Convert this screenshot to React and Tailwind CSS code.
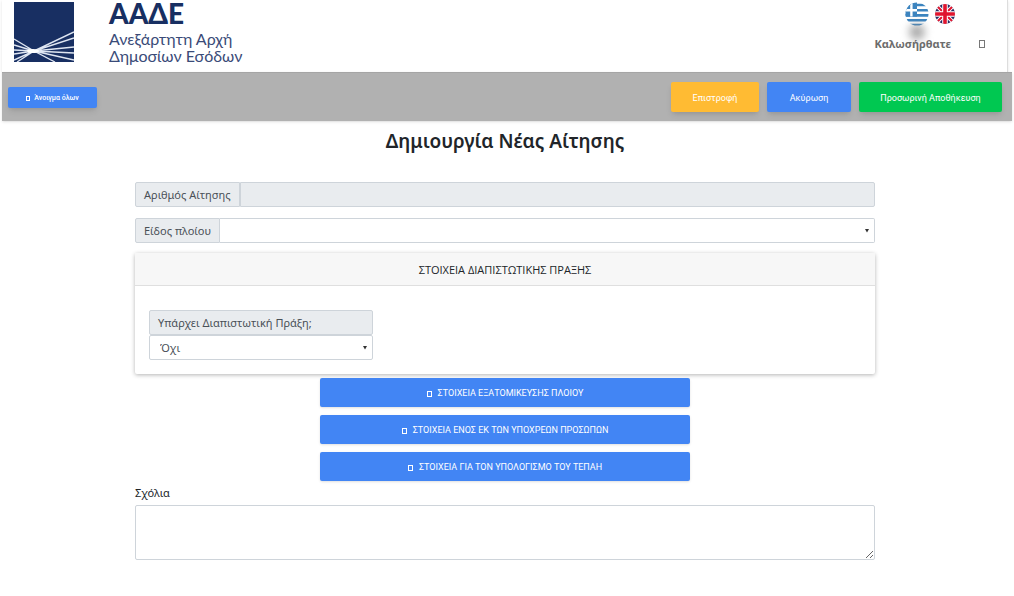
import { useState } from 'react';

const sections = [
  { id: 'vessel', title: 'ΣΤΟΙΧΕΙΑ ΕΞΑΤΟΜΙΚΕΥΣΗΣ ΠΛΟΙΟΥ' },
  { id: 'person', title: 'ΣΤΟΙΧΕΙΑ ΕΝΟΣ ΕΚ ΤΩΝ ΥΠΟΧΡΕΩΝ ΠΡΟΣΩΠΩΝ' },
  { id: 'fee', title: 'ΣΤΟΙΧΕΙΑ ΓΙΑ ΤΟΝ ΥΠΟΛΟΓΙΣΜΟ ΤΟΥ ΤΕΠΑΗ' }
];

const Logo = () => (
  <svg className="w-[60px] h-[60px]" viewBox="0 0 60 60" aria-hidden="true">
    <rect width="60" height="60" fill="#182f62" />
    <g stroke="#dfe6f2" strokeWidth="1.4">
      <path d="M20 49L0 37M20 49L0 43M20 49L0 48M20 49L0 52M20 49L0 58M20 49L3 60" />
      <path d="M20 49L60 30M20 49L60 36M20 49L60 45M20 49L60 51M20 49L60 58M20 49L41 60" />
    </g>
    <ellipse cx="19" cy="49" rx="6" ry="2" fill="#fff" />
  </svg>
);

const GreekFlag = () => (
  <svg className="w-6 h-6" viewBox="0 0 24 24" aria-hidden="true">
    <defs>
      <clipPath id="gr"><circle cx="12" cy="12" r="11.5" /></clipPath>
    </defs>
    <g clipPath="url(#gr)">
      <rect width="24" height="24" fill="#fff" />
      <path d="M0 3h24M0 8.2h24M0 13.4h24M0 18.2h24M0 23h24" stroke="#3c84bf" strokeWidth="2.6" />
      <rect width="12" height="14.6" fill="#3c84bf" />
      <path d="M6.4 0v14.6M0 8.2h12" stroke="#fff" strokeWidth="2.4" />
    </g>
  </svg>
);

const UkFlag = () => (
  <svg className="w-5 h-5" viewBox="0 0 20 20" aria-hidden="true">
    <defs>
      <clipPath id="uk"><circle cx="10" cy="10" r="10" /></clipPath>
    </defs>
    <g clipPath="url(#uk)">
      <rect width="20" height="20" fill="#262a63" />
      <path d="M0 0l20 20M20 0L0 20" stroke="#fff" strokeWidth="4" />
      <path d="M0 0l20 20M20 0L0 20" stroke="#e0152f" strokeWidth="2" />
      <path d="M10 0v20M0 10h20" stroke="#fff" strokeWidth="5.6" />
      <path d="M10 0v20M0 10h20" stroke="#e0152f" strokeWidth="3.6" />
    </g>
  </svg>
);

const Caret = () => (
  <svg className="absolute right-1.5 top-1/2 -translate-y-1/2 w-1 h-1 pointer-events-none" viewBox="0 0 4 4" aria-hidden="true">
    <path d="M0 0h4L2 3.5z" fill="#333" />
  </svg>
);

const App = () => {
  const [vesselType, setVesselType] = useState('');
  const [hasAct, setHasAct] = useState('no');
  const [comments, setComments] = useState('');

  return (
    <div className="min-h-screen bg-white px-0.5 font-['Noto_Sans',sans-serif] text-[11px] text-[#212529]">
      <header className="mr-1 flex h-[72px] items-start justify-between border-r border-[#ddd] pl-3 pr-5 shadow-sm">
        <a href="#" className="flex gap-[35px] text-[#182f62]">
          <span className="pt-0.5"><Logo /></span>
          <span className="font-[Lato,sans-serif]">
            <span className="block text-[28px] leading-[26px] font-black">ΑΑΔΕ</span>
            <span className="mt-1 block text-base leading-[17px] text-[#3a4b78]">
              Ανεξάρτητη Αρχή<br />Δημοσίων Εσόδων
            </span>
          </span>
        </a>
        <div className="flex flex-col">
          <div className="relative flex items-center gap-1.5 self-center pr-0.5 pt-0.5">
            <button type="button" aria-label="Ελληνικά"><GreekFlag /></button>
            <button type="button" aria-label="English"><UkFlag /></button>
            <span className="absolute left-1 top-6 h-4 w-4 rounded-full bg-[#888]/70 blur-xs"></span>
          </div>
          <div className="relative mt-2.5 flex items-center gap-7 font-bold text-[#6c6c6c]">
            <span>Καλωσήρθατε</span>
            <button type="button" aria-label="Έξοδος" className="mr-0.5 h-2 w-1.5 border border-[#777]"></button>
          </div>
        </div>
      </header>

      <div className="flex h-[49px] items-center justify-between border-t border-[#a5a5a5] bg-[#b1b1b1] pl-1.5 pr-2.5 font-[Roboto,sans-serif] text-white shadow">
        <button type="button" className="flex h-[21px] w-[89px] items-center justify-center gap-1 rounded-xs bg-[#4285f4] pt-0.5 text-[7px] font-medium shadow-md">
          <span className="h-[5px] w-1 border border-white"></span>
          Άνοιγμα όλων
        </button>
        <div className="flex gap-2 text-[9px]">
          <button type="button" className="h-[30px] w-[88px] rounded-xs bg-[#ffbb33] pt-1 shadow-md">Επιστροφή</button>
          <button type="button" className="h-[30px] w-[84px] rounded-xs bg-[#4285f4] pt-1 shadow-md">Ακύρωση</button>
          <button type="button" className="h-[30px] w-[143px] rounded-xs bg-[#00c851] pt-1 shadow-md">Προσωρινή Αποθήκευση</button>
        </div>
      </div>

      <main className="mr-1 px-4">
        <form className="mx-auto max-w-[740px]" onSubmit={(e) => e.preventDefault()}>
          <h1 className="pt-1.5 text-center text-[19px] leading-7 font-semibold">Δημιουργία Νέας Αίτησης</h1>

          <div className="mt-[27px] flex h-[25px]">
            <label htmlFor="number" className="flex items-center rounded-l-xs border border-[#ced4da] bg-[#e9ecef] px-2 pt-0.5 text-[#495057]">
              Αριθμός Αίτησης
            </label>
            <input id="number" readOnly className="min-w-0 flex-1 rounded-r-xs border border-[#ced4da] bg-[#e9ecef] px-2" />
          </div>

          <div className="mt-[11px] flex h-[25px]">
            <label htmlFor="type" className="flex items-center rounded-l-xs border border-[#ced4da] bg-[#e9ecef] px-2 pt-0.5 text-[#495057]">
              Είδος πλοίου
            </label>
            <div className="relative flex-1">
              <select
                id="type"
                value={vesselType}
                onChange={(e) => setVesselType(e.target.value)}
                className="h-full w-full appearance-none rounded-r-xs border border-l-0 border-[#ced4da] bg-white px-2"
              >
                <option value=""></option>
              </select>
              <Caret />
            </div>
          </div>

          <section className="mt-2.5 rounded-xs bg-white shadow-[0_1px_4px_rgba(0,0,0,0.3)]">
            <h2 className="flex h-[33px] items-center justify-center border-b border-[#dfdfdf] bg-[#f7f7f7] pt-0.5 font-['Open_Sans',sans-serif]">
              ΣΤΟΙΧΕΙΑ ΔΙΑΠΙΣΤΩΤΙΚΗΣ ΠΡΑΞΗΣ
            </h2>
            <div className="px-3.5 pt-6 pb-3.5 text-[#495057]">
              <div className="w-56">
                <label htmlFor="act" className="flex h-[25px] items-center rounded-xs border border-[#ced4da] bg-[#e9ecef] px-2 pt-0.5">
                  Υπάρχει Διαπιστωτική Πράξη;
                </label>
                <div className="relative h-[25px]">
                  <select
                    id="act"
                    value={hasAct}
                    onChange={(e) => setHasAct(e.target.value)}
                    className="h-full w-full appearance-none rounded-xs border border-[#ced4da] bg-white px-2.5 pt-0.5"
                  >
                    <option value="no">Όχι</option>
                    <option value="yes">Ναι</option>
                  </select>
                  <Caret />
                </div>
              </div>
            </div>
          </section>

          <div className="mx-auto mt-1 flex w-1/2 flex-col gap-2">
            {sections.map(section => (
              <button
                key={section.id}
                type="button"
                className="flex h-[29px] items-center justify-center gap-1.5 rounded-xs bg-[#4285f4] pt-0.5 font-[Roboto,sans-serif] text-[9px] text-white shadow"
              >
                <span className="h-1.5 w-[5px] border border-white"></span>
                {section.title}
              </button>
            ))}
          </div>

          <label htmlFor="comments" className="mt-1 block leading-4">Σχόλια</label>
          <textarea
            id="comments"
            value={comments}
            onChange={(e) => setComments(e.target.value)}
            className="mt-1 block h-[55px] w-full rounded-xs border border-[#ced4da] px-2 py-1"
          />
        </form>
      </main>
    </div>
  );
};

export default App;
